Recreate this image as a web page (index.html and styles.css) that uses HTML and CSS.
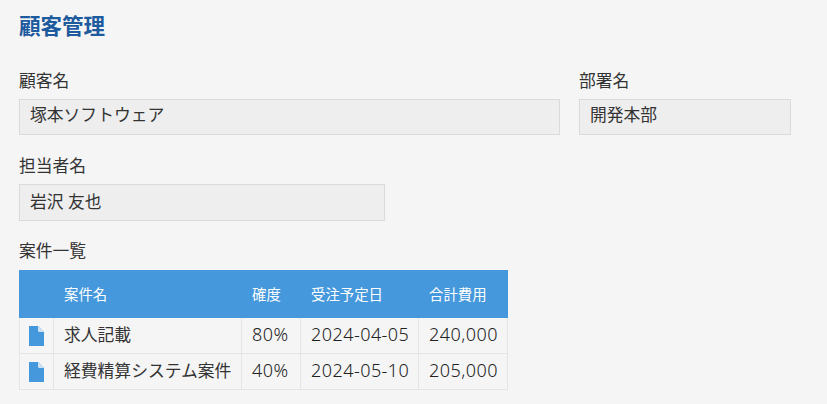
FILE: index.html
```html
<!DOCTYPE html>
<html lang="ja">
<head>
  <meta charset="UTF-8" />
  <title>顧客管理</title>
  <link rel="stylesheet" href="styles.css">
</head>
<body>
  <h1 class="page-title">顧客管理</h1>

  <div class="form-row form-row-top">
    <div class="field field-customer">
      <label class="field-label">顧客名</label>
      <div class="field-value">塚本ソフトウェア</div>
    </div>
    <div class="field field-dept">
      <label class="field-label">部署名</label>
      <div class="field-value">開発本部</div>
    </div>
  </div>

  <div class="form-row">
    <div class="field field-person">
      <label class="field-label">担当者名</label>
      <div class="field-value">岩沢 友也</div>
    </div>
  </div>

  <div class="list-label">案件一覧</div>
  <table class="deal-table">
    <thead>
      <tr>
        <th class="col-icon"></th>
        <th class="col-name">案件名</th>
        <th class="col-rate">確度</th>
        <th class="col-date">受注予定日</th>
        <th class="col-total">合計費用</th>
      </tr>
    </thead>
    <tbody>
      <tr>
        <td class="col-icon">
          <svg class="file-icon" viewBox="0 0 15 20">
            <path d="M0 0H9L15 6V20H0Z" fill="#4598dc"/>
            <path d="M9 0L15 6H10.5Q9 6 9 4.5Z" fill="#cfe2f3"/>
          </svg>
        </td>
        <td>求人記載</td>
        <td class="num">80%</td>
        <td class="num">2024-04-05</td>
        <td class="num">240,000</td>
      </tr>
      <tr>
        <td class="col-icon">
          <svg class="file-icon" viewBox="0 0 15 20">
            <path d="M0 0H9L15 6V20H0Z" fill="#4598dc"/>
            <path d="M9 0L15 6H10.5Q9 6 9 4.5Z" fill="#cfe2f3"/>
          </svg>
        </td>
        <td>経費精算システム案件</td>
        <td class="num">40%</td>
        <td class="num">2024-05-10</td>
        <td class="num">205,000</td>
      </tr>
    </tbody>
  </table>
</body>
</html>
```

FILE: styles.css
```css
body {
  font-family: "Noto Sans", "Noto Sans CJK JP", sans-serif;
  font-size: 16.8px;
  background: #f5f5f5;
  color: #333;
  margin: 0;
  padding: 10px 19px 0;
}

.page-title {
  margin: 0 0 27px;
  font-size: 21.5px;
  line-height: 32px;
  font-weight: 700;
  color: #1d5a9e;
}

.form-row {
  display: flex;
  gap: 19px;
  margin-bottom: 18px;
}

.form-row-top {
  margin-bottom: 19px;
}

.field-label {
  display: block;
  height: 30px;
  line-height: 24px;
}

.field-value {
  box-sizing: border-box;
  height: 37px;
  padding: 0 10px;
  line-height: 33px;
  background: #eee;
  border: 1px solid #dadada;
}

.form-row-top .field-value {
  height: 36px;
  line-height: 30px;
}

.field-customer { width: 541px; }
.field-dept { width: 212px; }
.field-person { width: 366px; }

.list-label {
  line-height: 24px;
  margin-bottom: 7px;
}

.deal-table {
  border-collapse: collapse;
  table-layout: fixed;
  width: 489px;
}

.deal-table th,
.deal-table td {
  box-sizing: border-box;
  padding: 0 10px;
  white-space: nowrap;
  text-align: left;
}

.deal-table th {
  height: 47px;
  background: #4598dc;
  border: 1px solid #4598dc;
  color: white;
  font-size: 14.4px;
  font-weight: 400;
  padding-bottom: 2px;
}

.deal-table td {
  height: 36px;
  padding-bottom: 3px;
  border: 1px solid #e5e5e5;
}

.deal-table .col-icon { width: 34px; padding: 0; }
.col-name { width: 188px; }
.col-rate { width: 59px; }
.col-date { width: 118px; }
.col-total { width: 89px; }

.num {
  font-family: "Noto Sans", sans-serif;
  font-size: 18px;
  font-weight: 300;
  color: #222;
  letter-spacing: 0.45px;
}

.file-icon {
  display: block;
  width: 15px;
  height: 20px;
  margin: 0 auto;
}
```
